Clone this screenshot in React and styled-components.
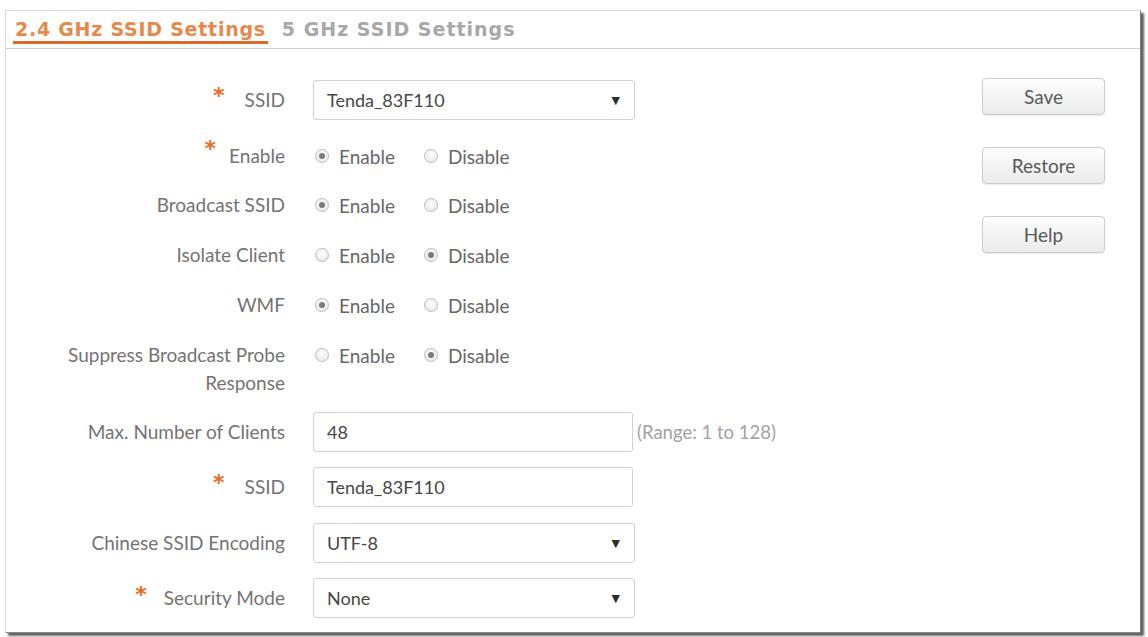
import React from 'react';
import styled, { createGlobalStyle } from 'styled-components';

const Global = createGlobalStyle`
  html, body { margin: 0; padding: 0; background: #fff; }
  body {
    font-family: Lato, "Open Sans", "Liberation Sans", sans-serif;
    width: 1148px; height: 637px; overflow: hidden;
  }
`;

const Page = styled.div`
  padding: 10px 0 0 5px;
`;

const Panel = styled.div`
  width: 1134px;
  height: 621px;
  background: #fff;
  border: 1px solid #dadada;
  border-right-color: #7a7a7a;
  border-bottom-color: #8a8a8a;
  box-shadow: 3px 3px 2px rgba(60, 60, 60, 0.8);
  display: flex;
  flex-direction: column;
`;

const TabBar = styled.div`
  height: 37px;
  border-bottom: 1px solid #cfcfcf;
  display: flex;
  align-items: flex-end;
  padding-left: 7px;
  gap: 12px;
`;

const Tab = styled.div`
  font-family: "DejaVu Sans", Verdana, sans-serif;
  font-weight: bold;
  font-size: 19px;
  letter-spacing: ${(p) => (p.$active ? 0.75 : 1)}px;
  line-height: 24px;
  padding: 0 2px;
  margin-bottom: 4px;
  color: ${(p) => (p.$active ? '#e8894a' : '#a8a8a8')};
  border-bottom: 3px solid ${(p) => (p.$active ? '#dc6a2a' : 'transparent')};
`;

const Body = styled.div`
  display: flex;
  flex: 1;
`;

const Form = styled.div`
  display: flex;
  flex-direction: column;
  padding-top: 31px;
`;

const Row = styled.div`
  display: grid;
  grid-template-columns: 279px auto;
  column-gap: 28px;
  align-items: ${(p) => (p.$top ? 'start' : 'center')};
  margin-top: ${(p) => p.$space || 0}px;
`;

const Label = styled.div`
  display: flex;
  justify-content: flex-end;
  align-items: center;
  text-align: right;
  font-size: 19px;
  line-height: 28px;
  color: #747474;
`;

const Star = styled.span`
  color: #f06a1a;
  font-family: "DejaVu Sans", sans-serif;
  font-weight: bold;
  font-size: 22px;
  line-height: 20px;
  margin-right: ${(p) => p.$gap || 17}px;
  position: relative;
  top: ${(p) => p.$raise || -3}px;
`;

const Controls = styled.div`
  display: flex;
  align-items: center;
`;

const RadioGroup = styled.div`
  display: flex;
  align-items: center;
  gap: 27px;
  height: 28px;
`;

const Option = styled.label`
  display: inline-flex;
  align-items: center;
  font-size: 19px;
  color: #686868;
`;

const RadioDot = styled.span`
  width: 14px;
  height: 14px;
  box-sizing: border-box;
  border-radius: 50%;
  border: 1px solid #c4c4c4;
  background: radial-gradient(circle at 50% 40%, #ffffff 0%, #e2e2e2 100%);
  box-shadow: 0 0 1px rgba(0, 0, 0, 0.15);
  margin: 0 10px 0 2px;
  display: inline-flex;
  align-items: center;
  justify-content: center;
  &::after {
    content: '';
    width: 6px;
    height: 6px;
    border-radius: 50%;
    background: ${(p) => (p.$checked ? '#7a7a7a' : 'transparent')};
  }
`;

const TextBox = styled.div`
  width: ${(p) => p.$w || 320}px;
  height: 40px;
  box-sizing: border-box;
  border: 1px solid #d2d2d2;
  border-radius: 3px;
  padding: 0 13px;
  display: flex;
  align-items: center;
  justify-content: space-between;
  font-size: 18px;
  color: #474747;
  background: #fff;
`;

const Arrow = styled.span`
  font-size: 11px;
  color: #2e2e2e;
  font-family: "DejaVu Sans", sans-serif;
  margin-right: 1px;
`;

const Hint = styled.span`
  margin-left: 4px;
  font-size: 18.5px;
  color: #a3a3a3;
`;

const Buttons = styled.div`
  margin-left: auto;
  margin-right: 35px;
  padding-top: 29px;
  display: flex;
  flex-direction: column;
  gap: 32px;
`;

const Button = styled.button`
  width: 123px;
  height: 37px;
  border: 1px solid #cdcdcd;
  border-radius: 4px;
  background: linear-gradient(#fdfdfd, #ebebeb);
  box-shadow: 0 1px 1px rgba(0, 0, 0, 0.08);
  font-family: Lato, "Open Sans", sans-serif;
  font-size: 19px;
  color: #595959;
  padding: 0;
`;

const Radios = ({ value }) => (
  <RadioGroup>
    <Option>
      <RadioDot $checked={value === 'enable'} />
      Enable
    </Option>
    <Option>
      <RadioDot $checked={value === 'disable'} />
      Disable
    </Option>
  </RadioGroup>
);

export default function App() {
  return (
    <>
      <Global />
      <Page>
        <Panel>
          <TabBar>
            <Tab $active>2.4 GHz SSID Settings</Tab>
            <Tab>5 GHz SSID Settings</Tab>
          </TabBar>
          <Body>
            <Form>
              <Row>
                <Label><Star $gap={20} $raise={-4}>*</Star>SSID</Label>
                <Controls>
                  <TextBox $w={322}>Tenda_83F110<Arrow>▼</Arrow></TextBox>
                </Controls>
              </Row>
              <Row $space={22}>
                <Label><Star $gap={13} $raise={-7}>*</Star>Enable</Label>
                <Radios value="enable" />
              </Row>
              <Row $space={21}>
                <Label>Broadcast SSID</Label>
                <Radios value="enable" />
              </Row>
              <Row $space={22}>
                <Label>Isolate Client</Label>
                <Radios value="disable" />
              </Row>
              <Row $space={22}>
                <Label>WMF</Label>
                <Radios value="enable" />
              </Row>
              <Row $space={22} $top>
                <Label>Suppress Broadcast Probe<br />Response</Label>
                <Radios value="disable" />
              </Row>
              <Row $space={15}>
                <Label>Max. Number of Clients</Label>
                <Controls>
                  <TextBox>48</TextBox>
                  <Hint>(Range: 1 to 128)</Hint>
                </Controls>
              </Row>
              <Row $space={15}>
                <Label><Star $gap={20} $raise={-4}>*</Star>SSID</Label>
                <Controls>
                  <TextBox>Tenda_83F110</TextBox>
                </Controls>
              </Row>
              <Row $space={16}>
                <Label>Chinese SSID Encoding</Label>
                <Controls>
                  <TextBox $w={322}>UTF-8<Arrow>▼</Arrow></TextBox>
                </Controls>
              </Row>
              <Row $space={15}>
                <Label><Star $gap={17} $raise={-3}>*</Star>Security Mode</Label>
                <Controls>
                  <TextBox $w={322}>None<Arrow>▼</Arrow></TextBox>
                </Controls>
              </Row>
            </Form>
            <Buttons>
              <Button>Save</Button>
              <Button>Restore</Button>
              <Button>Help</Button>
            </Buttons>
          </Body>
        </Panel>
      </Page>
    </>
  );
}
